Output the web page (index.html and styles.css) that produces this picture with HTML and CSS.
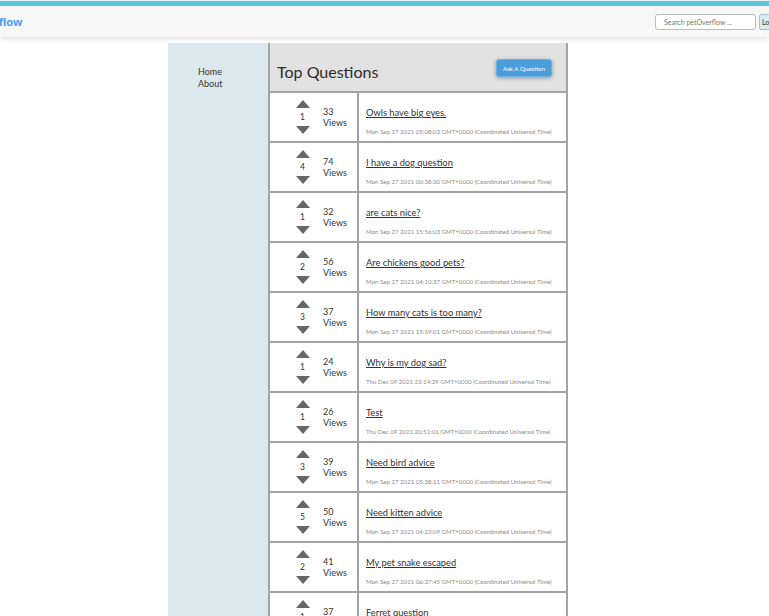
FILE: index.html
```html
<!DOCTYPE html>
<html>
<head>
<meta charset="utf-8">
<link rel="stylesheet" href="styles.css">
</head>
<body>
<header class="topbar">
  <div class="navbar">
    <span class="brand">petOverflow</span>
    <div class="nav-right">
      <input class="search" type="text" placeholder="Search petOverflow ...">
      <button class="login">Log In</button>
    </div>
  </div>
</header>
<div class="layout">
  <aside class="sidebar">
    <a class="nav-link" href="#">Home</a>
    <a class="nav-link" href="#">About</a>
  </aside>
  <main class="questions">
    <div class="q-header">
      <h1 class="q-title">Top Questions</h1>
      <button class="ask">Ask A Question</button>
    </div>
    <div class="q-row">
      <div class="q-stats">
        <div class="vote"><span class="up"></span><span class="score">1</span><span class="down"></span></div>
        <div class="views">33<br>Views</div>
      </div>
      <div class="q-body"><a class="q-link" href="#">Owls have big eyes.</a><div class="q-date">Mon Sep 27 2021 05:08:03 GMT+0000 (Coordinated Universal Time)</div></div>
    </div>
    <div class="q-row">
      <div class="q-stats">
        <div class="vote"><span class="up"></span><span class="score">4</span><span class="down"></span></div>
        <div class="views">74<br>Views</div>
      </div>
      <div class="q-body"><a class="q-link" href="#">I have a dog question</a><div class="q-date">Mon Sep 27 2021 00:38:30 GMT+0000 (Coordinated Universal Time)</div></div>
    </div>
    <div class="q-row">
      <div class="q-stats">
        <div class="vote"><span class="up"></span><span class="score">1</span><span class="down"></span></div>
        <div class="views">32<br>Views</div>
      </div>
      <div class="q-body"><a class="q-link" href="#">are cats nice?</a><div class="q-date">Mon Sep 27 2021 15:56:03 GMT+0000 (Coordinated Universal Time)</div></div>
    </div>
    <div class="q-row">
      <div class="q-stats">
        <div class="vote"><span class="up"></span><span class="score">2</span><span class="down"></span></div>
        <div class="views">56<br>Views</div>
      </div>
      <div class="q-body"><a class="q-link" href="#">Are chickens good pets?</a><div class="q-date">Mon Sep 27 2021 04:10:37 GMT+0000 (Coordinated Universal Time)</div></div>
    </div>
    <div class="q-row">
      <div class="q-stats">
        <div class="vote"><span class="up"></span><span class="score">3</span><span class="down"></span></div>
        <div class="views">37<br>Views</div>
      </div>
      <div class="q-body"><a class="q-link" href="#">How many cats is too many?</a><div class="q-date">Mon Sep 27 2021 15:59:01 GMT+0000 (Coordinated Universal Time)</div></div>
    </div>
    <div class="q-row">
      <div class="q-stats">
        <div class="vote"><span class="up"></span><span class="score">1</span><span class="down"></span></div>
        <div class="views">24<br>Views</div>
      </div>
      <div class="q-body"><a class="q-link" href="#">Why is my dog sad?</a><div class="q-date">Thu Dec 09 2021 22:14:29 GMT+0000 (Coordinated Universal Time)</div></div>
    </div>
    <div class="q-row">
      <div class="q-stats">
        <div class="vote"><span class="up"></span><span class="score">1</span><span class="down"></span></div>
        <div class="views">26<br>Views</div>
      </div>
      <div class="q-body"><a class="q-link" href="#">Test</a><div class="q-date">Thu Dec 09 2021 20:51:01 GMT+0000 (Coordinated Universal Time)</div></div>
    </div>
    <div class="q-row">
      <div class="q-stats">
        <div class="vote"><span class="up"></span><span class="score">3</span><span class="down"></span></div>
        <div class="views">39<br>Views</div>
      </div>
      <div class="q-body"><a class="q-link" href="#">Need bird advice</a><div class="q-date">Mon Sep 27 2021 05:38:11 GMT+0000 (Coordinated Universal Time)</div></div>
    </div>
    <div class="q-row">
      <div class="q-stats">
        <div class="vote"><span class="up"></span><span class="score">5</span><span class="down"></span></div>
        <div class="views">50<br>Views</div>
      </div>
      <div class="q-body"><a class="q-link" href="#">Need kitten advice</a><div class="q-date">Mon Sep 27 2021 04:23:09 GMT+0000 (Coordinated Universal Time)</div></div>
    </div>
    <div class="q-row">
      <div class="q-stats">
        <div class="vote"><span class="up"></span><span class="score">2</span><span class="down"></span></div>
        <div class="views">41<br>Views</div>
      </div>
      <div class="q-body"><a class="q-link" href="#">My pet snake escaped</a><div class="q-date">Mon Sep 27 2021 06:37:45 GMT+0000 (Coordinated Universal Time)</div></div>
    </div>
    <div class="q-row">
      <div class="q-stats">
        <div class="vote"><span class="up"></span><span class="score">1</span><span class="down"></span></div>
        <div class="views">37<br>Views</div>
      </div>
      <div class="q-body"><a class="q-link" href="#">Ferret question</a><div class="q-date">Mon Sep 27 2021 05:12:40 GMT+0000 (Coordinated Universal Time)</div></div>
    </div>
  </main>
</div>
</body>
</html>
```
FILE: styles.css
```css
html, body {
  margin: 0;
  padding: 0;
  overflow: hidden;
}
body {
  font-family: Lato, "Noto Sans", sans-serif;
  color: #333;
  background: #fff;
}
.topbar {
  border-top: 1px solid #e8f6fa;
  background: #f7f7f7;
  box-shadow: 0 2px 5px rgba(0,0,0,0.12);
  position: relative;
  z-index: 2;
}
.navbar {
  border-top: 5px solid #5bc5da;
  height: 31px;
  display: flex;
  align-items: center;
  justify-content: space-between;
  margin-left: -46px;
  margin-right: -30px;
}
.brand {
  font-family: "Noto Sans", sans-serif;
  font-weight: bold;
  font-size: 11px;
  color: #4a9fe0;
}
.nav-right {
  display: flex;
  align-items: center;
  gap: 3px;
}
.search {
  width: 101px;
  height: 16px;
  box-sizing: border-box;
  border: 1px solid #bcbcbc;
  border-radius: 3px;
  padding: 0 8px;
  font-family: inherit;
  font-size: 7px;
  background: #fff;
}
.search::placeholder {
  color: #777;
}
.login {
  height: 16px;
  width: 40px;
  box-sizing: border-box;
  border: 1px solid #a9c3d0;
  border-radius: 2px;
  background: #dbecf4;
  font-family: inherit;
  font-size: 7px;
  color: #333;
  padding: 0 2px;
  text-align: left;
}
.layout {
  display: flex;
  margin-left: 168px;
  margin-top: 6px;
}
.sidebar {
  width: 100px;
  min-height: 620px;
  background: #dbe9ee;
  display: flex;
  flex-direction: column;
  padding: 23px 0 0 30px;
  box-sizing: border-box;
}
.nav-link {
  color: #333;
  text-decoration: none;
  font-size: 9px;
  line-height: 12px;
}
.questions {
  width: 300px;
  border-left: 2px solid #a3a3a3;
  border-right: 2px solid #a3a3a3;
  box-sizing: border-box;
}
.q-header {
  background: #e2e2e2;
  height: 48px;
  border-bottom: 2px solid #a3a3a3;
  display: flex;
  align-items: flex-start;
  justify-content: space-between;
  padding: 0 14px 0 7px;
}
.q-title {
  margin: 19px 0 0;
  font-size: 16px;
  font-weight: normal;
  color: #2b2b2b;
  line-height: 20px;
}
.ask {
  margin-top: 16px;
  width: 56px;
  height: 18px;
  border: 1px solid #6ab0e6;
  border-radius: 3px;
  background: #4a9edb;
  color: #fff;
  font-family: inherit;
  font-size: 6.2px;
  padding: 0;
  box-shadow: 0 1px 4px rgba(0,0,0,0.35);
}
.q-row {
  display: flex;
  height: 50px;
  border-bottom: 2px solid #a3a3a3;
  box-sizing: border-box;
}
.q-stats {
  width: 89px;
  border-right: 2px solid #a3a3a3;
  display: flex;
  align-items: center;
  padding-left: 25px;
  box-sizing: border-box;
}
.vote {
  width: 15px;
  display: flex;
  flex-direction: column;
  align-items: center;
}
.up, .down {
  width: 0;
  height: 0;
  border-left: 7.5px solid transparent;
  border-right: 7.5px solid transparent;
}
.up {
  border-bottom: 8px solid #666;
}
.down {
  border-top: 8px solid #666;
}
.score {
  font-size: 8.5px;
  line-height: 18px;
  color: #333;
}
.views {
  margin-left: 13px;
  font-size: 9px;
  line-height: 11px;
  color: #333;
  margin-top: -1px;
}
.q-body {
  flex: 1;
  padding: 14px 0 0 7px;
}
.q-link {
  display: block;
  color: #333;
  font-size: 9.3px;
  line-height: 12px;
  text-decoration: underline;
}
.q-date {
  margin-top: 9px;
  font-size: 6.1px;
  line-height: 8px;
  color: #8c8c8c;
  white-space: nowrap;
}
```
